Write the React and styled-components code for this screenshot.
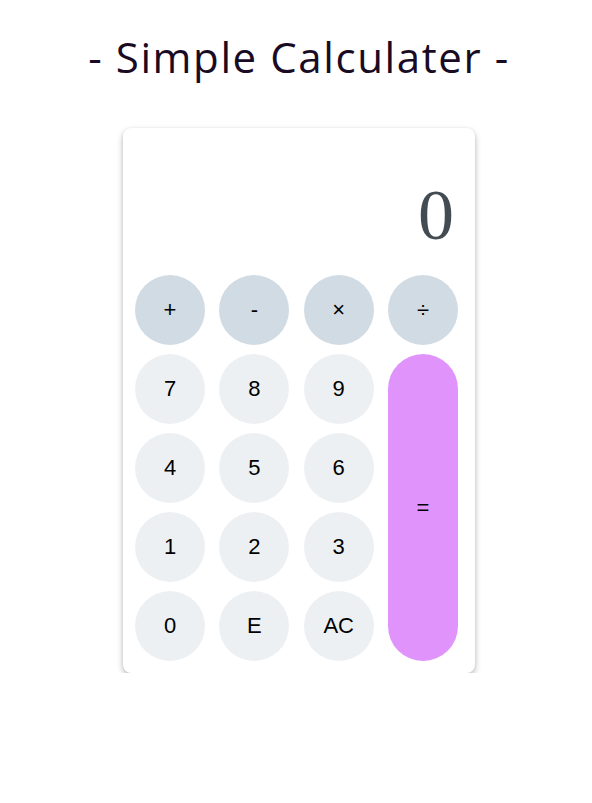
import styled, { createGlobalStyle } from "styled-components";

const GlobalStyle = createGlobalStyle`
  body {
    margin: 0;
    background: #ffffff;
    font-family: "Liberation Sans", Arial, sans-serif;
  }
`;

const Page = styled.div`
  display: flex;
  flex-direction: column;
  align-items: center;
  padding: 29px 0 0 6px;
`;

const Title = styled.h1`
  margin: 0 0 43px;
  font-family: "Open Sans", "Noto Sans", sans-serif;
  font-weight: 400;
  font-size: 42px;
  line-height: 56px;
  letter-spacing: 1.6px;
  color: #1a0b24;
`;

const Card = styled.div`
  width: 352px;
  background: #ffffff;
  border-radius: 8px;
  box-shadow: 0 0 2px rgba(0, 0, 0, 0.08), 0 3px 6px rgba(0, 0, 0, 0.28);
`;

const Display = styled.div`
  height: 147px;
  box-sizing: border-box;
  display: flex;
  align-items: flex-end;
  justify-content: flex-end;
  padding: 0 21px 24px 0;
  font-family: "Liberation Serif", "Times New Roman", serif;
  font-size: 72px;
  line-height: 1;
  color: #434c52;
`;

const Keypad = styled.div`
  display: grid;
  grid-template-columns: repeat(4, 70px);
  grid-auto-rows: 70px;
  column-gap: 14.33px;
  row-gap: 9px;
  padding: 0 17px 12px 12px;
`;

const tones = {
  op: "#d1dbe3",
  num: "#edf0f3",
  equals: "#e094fb",
};

const Key = styled.button`
  border: none;
  border-radius: 35px;
  background: ${({ $tone }) => tones[$tone]};
  color: #000000;
  font-family: "Liberation Sans", Arial, sans-serif;
  font-size: 22px;
  padding: 0;
  cursor: pointer;
  grid-row: ${({ $tall }) => ($tall ? "2 / span 4" : "auto")};
  grid-column: ${({ $tall }) => ($tall ? "4" : "auto")};
`;

const operators = ["+", "-", "×", "÷"];
const numbers = ["7", "8", "9", "4", "5", "6", "1", "2", "3", "0", "E", "AC"];

export default function App() {
  return (
    <>
      <GlobalStyle />
      <Page>
        <Title>- Simple Calculater -</Title>
        <Card>
          <Display>0</Display>
          <Keypad>
            {operators.map((op) => (
              <Key key={op} $tone="op">
                {op}
              </Key>
            ))}
            <Key $tone="equals" $tall>
              =
            </Key>
            {numbers.map((n) => (
              <Key key={n} $tone="num">
                {n}
              </Key>
            ))}
          </Keypad>
        </Card>
      </Page>
    </>
  );
}
